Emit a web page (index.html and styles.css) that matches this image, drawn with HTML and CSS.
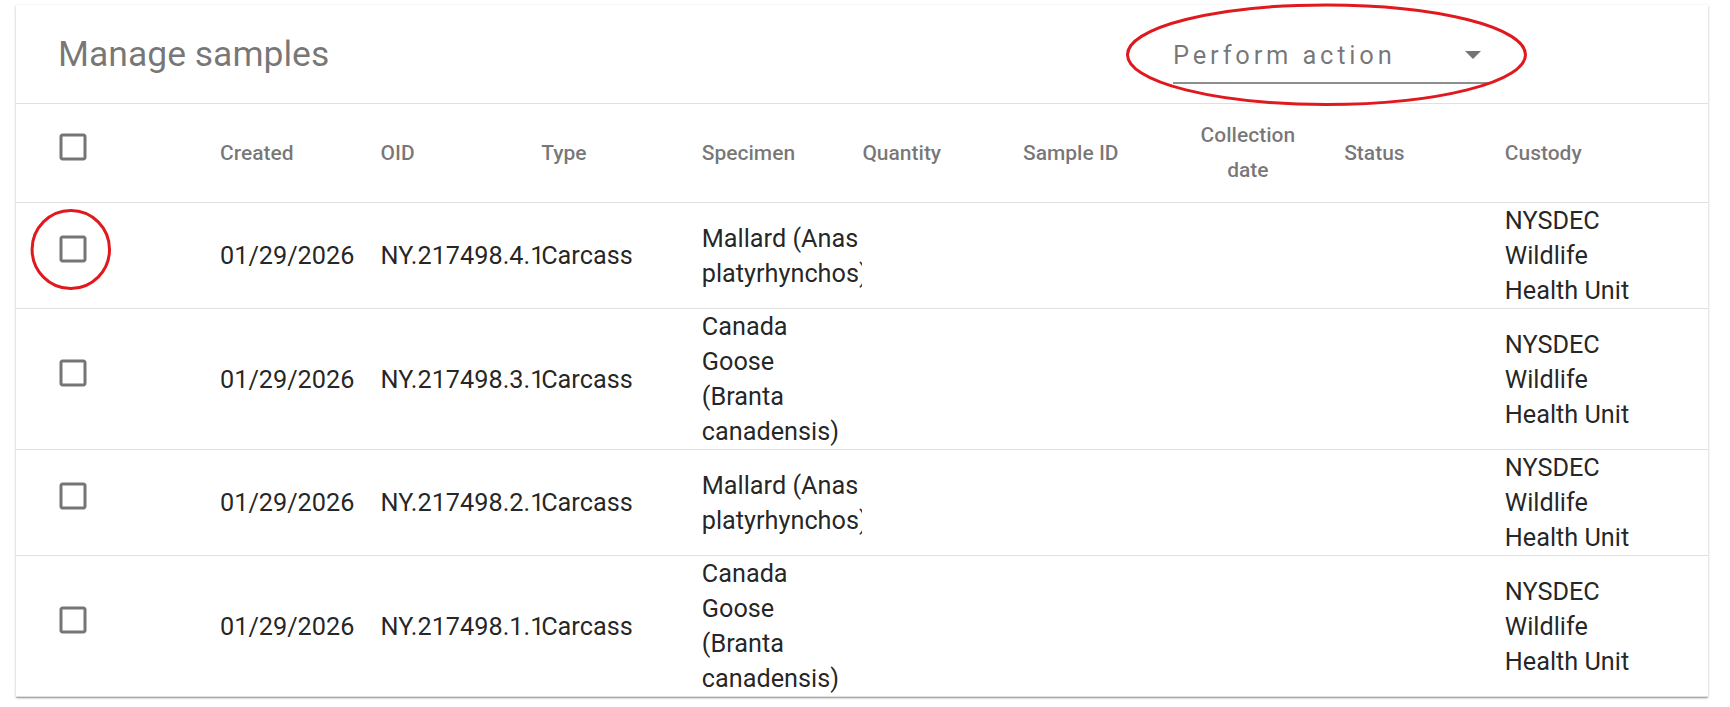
FILE: index.html
```html
<!DOCTYPE html>
<html lang="en">
  <head>
    <meta charset="UTF-8" />
    <meta name="viewport" content="width=device-width, initial-scale=1.0" />
    <link rel="stylesheet" href="styles.css">
  </head>
  <body>
    <div class="page">
      <div class="card">
        <div class="card-head">
          <h1 class="title">Manage samples</h1>
          <div class="action-select">
            <span>Perform action</span>
            <svg class="drop" width="16" height="8" viewBox="0 0 16 8"><polygon points="0,0 16,0 8,8" /></svg>
          </div>
        </div>

        <!-- column headers -->
        <div class="row head-row">
          <div class="cell check">
            <svg width="36" height="36" viewBox="0 0 24 24"><path d="M19 5v14H5V5h14m0-2H5c-1.11 0-2 .9-2 2v14c0 1.1.89 2 2 2h14c1.11 0 2-.9 2-2V5c0-1.1-.89-2-2-2z" /></svg>
          </div>
          <div class="cell">Created</div>
          <div class="cell">OID</div>
          <div class="cell">Type</div>
          <div class="cell">Specimen</div>
          <div class="cell">Quantity</div>
          <div class="cell">Sample ID</div>
          <div class="cell center">Collection date</div>
          <div class="cell">Status</div>
          <div class="cell">Custody</div>
        </div>

        <div class="row">
          <div class="cell check">
            <svg width="36" height="36" viewBox="0 0 24 24"><path d="M19 5v14H5V5h14m0-2H5c-1.11 0-2 .9-2 2v14c0 1.1.89 2 2 2h14c1.11 0 2-.9 2-2V5c0-1.1-.89-2-2-2z" /></svg>
          </div>
          <div class="cell">01/29/2026</div>
          <div class="cell">NY.217498.4.1</div>
          <div class="cell">Carcass</div>
          <div class="cell">Mallard (Anas platyrhynchos)</div>
          <div class="cell"></div>
          <div class="cell"></div>
          <div class="cell"></div>
          <div class="cell"></div>
          <div class="cell">NYSDEC Wildlife Health Unit</div>
        </div>

        <div class="row">
          <div class="cell check">
            <svg width="36" height="36" viewBox="0 0 24 24"><path d="M19 5v14H5V5h14m0-2H5c-1.11 0-2 .9-2 2v14c0 1.1.89 2 2 2h14c1.11 0 2-.9 2-2V5c0-1.1-.89-2-2-2z" /></svg>
          </div>
          <div class="cell">01/29/2026</div>
          <div class="cell">NY.217498.3.1</div>
          <div class="cell">Carcass</div>
          <div class="cell">Canada Goose (Branta canadensis)</div>
          <div class="cell"></div>
          <div class="cell"></div>
          <div class="cell"></div>
          <div class="cell"></div>
          <div class="cell">NYSDEC Wildlife Health Unit</div>
        </div>

        <div class="row">
          <div class="cell check">
            <svg width="36" height="36" viewBox="0 0 24 24"><path d="M19 5v14H5V5h14m0-2H5c-1.11 0-2 .9-2 2v14c0 1.1.89 2 2 2h14c1.11 0 2-.9 2-2V5c0-1.1-.89-2-2-2z" /></svg>
          </div>
          <div class="cell">01/29/2026</div>
          <div class="cell">NY.217498.2.1</div>
          <div class="cell">Carcass</div>
          <div class="cell">Mallard (Anas platyrhynchos)</div>
          <div class="cell"></div>
          <div class="cell"></div>
          <div class="cell"></div>
          <div class="cell"></div>
          <div class="cell">NYSDEC Wildlife Health Unit</div>
        </div>

        <div class="row">
          <div class="cell check">
            <svg width="36" height="36" viewBox="0 0 24 24"><path d="M19 5v14H5V5h14m0-2H5c-1.11 0-2 .9-2 2v14c0 1.1.89 2 2 2h14c1.11 0 2-.9 2-2V5c0-1.1-.89-2-2-2z" /></svg>
          </div>
          <div class="cell">01/29/2026</div>
          <div class="cell">NY.217498.1.1</div>
          <div class="cell">Carcass</div>
          <div class="cell">Canada Goose (Branta canadensis)</div>
          <div class="cell"></div>
          <div class="cell"></div>
          <div class="cell"></div>
          <div class="cell"></div>
          <div class="cell">NYSDEC Wildlife Health Unit</div>
        </div>
      </div>

      <!-- red annotation marks drawn over the screenshot -->
      <svg class="marks" width="1730" height="707" viewBox="0 0 1730 707">
        <ellipse cx="1326.5" cy="54.7" rx="199" ry="49.8" />
        <ellipse cx="70.8" cy="249.5" rx="38.7" ry="39" />
      </svg>
    </div>
  </body>
</html>
```

FILE: styles.css
```css
* {
  box-sizing: border-box;
}
body {
  margin: 0;
  background: #fff;
  font-family: Roboto, "Noto Sans", sans-serif;
}
.page {
  position: relative;
  width: 1730px;
  height: 707px;
  overflow: hidden;
  padding: 5px 22px 0 16px;
}
.card {
  background: #fff;
  box-shadow: 0 1px 3px rgba(0, 0, 0, 0.2), 0 1px 1px rgba(0, 0, 0, 0.14),
    0 2px 1px -1px rgba(0, 0, 0, 0.12);
}

.card-head {
  display: flex;
  align-items: center;
  height: 99px;
  padding-left: 42px;
  border-bottom: 1px solid #e0e0e0;
}
.title {
  margin: 0;
  font-size: 35.5px;
  font-weight: 400;
  color: rgba(0, 0, 0, 0.54);
}
.action-select {
  display: flex;
  align-items: center;
  justify-content: space-between;
  width: 315px;
  margin-left: auto;
  margin-right: 220px;
  padding: 15px 7px 12px 0;
  border-bottom: 2px solid #8e8e8e;
  font-size: 25.5px;
  letter-spacing: 3.8px;
  color: rgba(0, 0, 0, 0.54);
}
.drop {
  fill: #757575;
}

.row {
  display: grid;
  grid-template-columns: 204px repeat(9, 160.6px) 1fr;
  align-items: center;
  border-bottom: 1px solid #e0e0e0;
  font-size: 25.25px;
  line-height: 35px;
  color: rgba(0, 0, 0, 0.87);
}
.cell {
  overflow: hidden;
  padding-right: 2px;
}
.check {
  display: flex;
  padding-left: 39px;
}
.check svg {
  margin-bottom: 13px;
  fill: rgba(0, 0, 0, 0.54);
}
.head-row {
  padding: 14px 0;
  font-size: 21px;
  font-weight: 500;
  color: rgba(0, 0, 0, 0.54);
}
.head-row .center {
  padding-right: 32px;
  text-align: center;
}

.marks {
  position: absolute;
  left: 0;
  top: 0;
  pointer-events: none;
}
.marks ellipse {
  fill: none;
  stroke: #e0191f;
  stroke-width: 3;
}
```
